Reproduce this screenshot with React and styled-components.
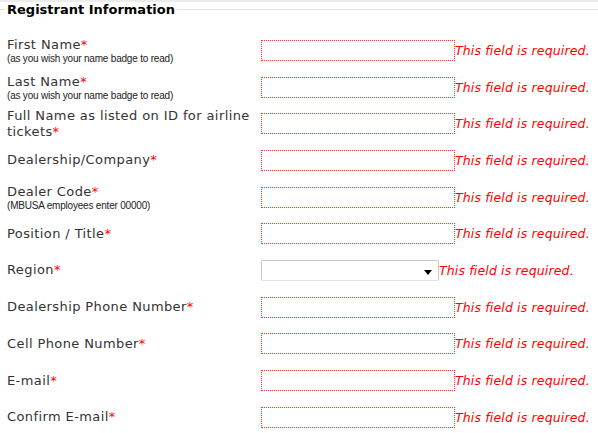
import React from "react";
import styled, { createGlobalStyle } from "styled-components";

const GlobalStyle = createGlobalStyle`
  body {
    margin: 0;
    background: #fff;
    font-family: "DejaVu Sans", Verdana, sans-serif;
  }
`;

const TopBand = styled.div`
  height: 2px;
  background: #ececec;
`;

const Fieldset = styled.fieldset`
  margin: 0;
  padding: 0 0 0 5px;
  border: none;
  border-top: 1px solid #e3e3e3;
`;

const Legend = styled.legend`
  padding: 0 2px;
  font-size: 13px;
  font-weight: bold;
  color: #000;
`;

const Rows = styled.div`
  padding-left: 2px;
  padding-top: 15px;
`;

const Row = styled.div`
  display: flex;
  align-items: center;
  height: 36.7px;
`;

const LabelCell = styled.label`
  width: 254px;
  flex: none;
  color: #333;
  font-size: 13px;
  line-height: 16px;
  letter-spacing: 0.4px;
`;

const Star = styled.span`
  color: #f00;
`;

const Hint = styled.span`
  display: block;
  font-family: "Liberation Sans", Arial, sans-serif;
  font-size: 10px;
  line-height: 11px;
  letter-spacing: -0.2px;
  color: #222;
`;

const Input = styled.input`
  box-sizing: border-box;
  width: 194px;
  height: 21px;
  margin: 0;
  border: 1px dotted #ff3030;
  background: #fff;
  outline: none;
`;

const SelectBox = styled.div`
  position: relative;
  box-sizing: border-box;
  width: 178px;
  height: 21px;
  border: 1px solid #c9c9c9;
  border-bottom-color: #dfe3e8;
  border-radius: 2px;
  background: #fff;
`;

const Arrow = styled.span`
  position: absolute;
  right: 6px;
  top: 9px;
  width: 0;
  height: 0;
  border-left: 4px solid transparent;
  border-right: 4px solid transparent;
  border-top: 5px solid #000;
`;

const Error = styled.span`
  color: #f00;
  font-style: italic;
  font-size: 12.5px;
  letter-spacing: 0.15px;
  white-space: nowrap;
`;

const fields = [
  { label: "First Name", hint: "(as you wish your name badge to read)" },
  { label: "Last Name", hint: "(as you wish your name badge to read)" },
  { label: "Full Name as listed on ID for airline tickets" },
  { label: "Dealership/Company" },
  { label: "Dealer Code", hint: "(MBUSA employees enter 00000)" },
  { label: "Position / Title" },
  { label: "Region", select: true },
  { label: "Dealership Phone Number" },
  { label: "Cell Phone Number" },
  { label: "E-mail" },
  { label: "Confirm E-mail" },
];

export default function App() {
  return (
    <>
      <GlobalStyle />
      <TopBand />
      <Fieldset>
        <Legend>Registrant Information</Legend>
        <Rows>
          {fields.map((f) => (
            <Row key={f.label}>
              <LabelCell>
                {f.label}
                <Star>*</Star>
                {f.hint && <Hint>{f.hint}</Hint>}
              </LabelCell>
              {f.select ? (
                <SelectBox>
                  <Arrow />
                </SelectBox>
              ) : (
                <Input type="text" />
              )}
              <Error>This field is required.</Error>
            </Row>
          ))}
        </Rows>
      </Fieldset>
    </>
  );
}
